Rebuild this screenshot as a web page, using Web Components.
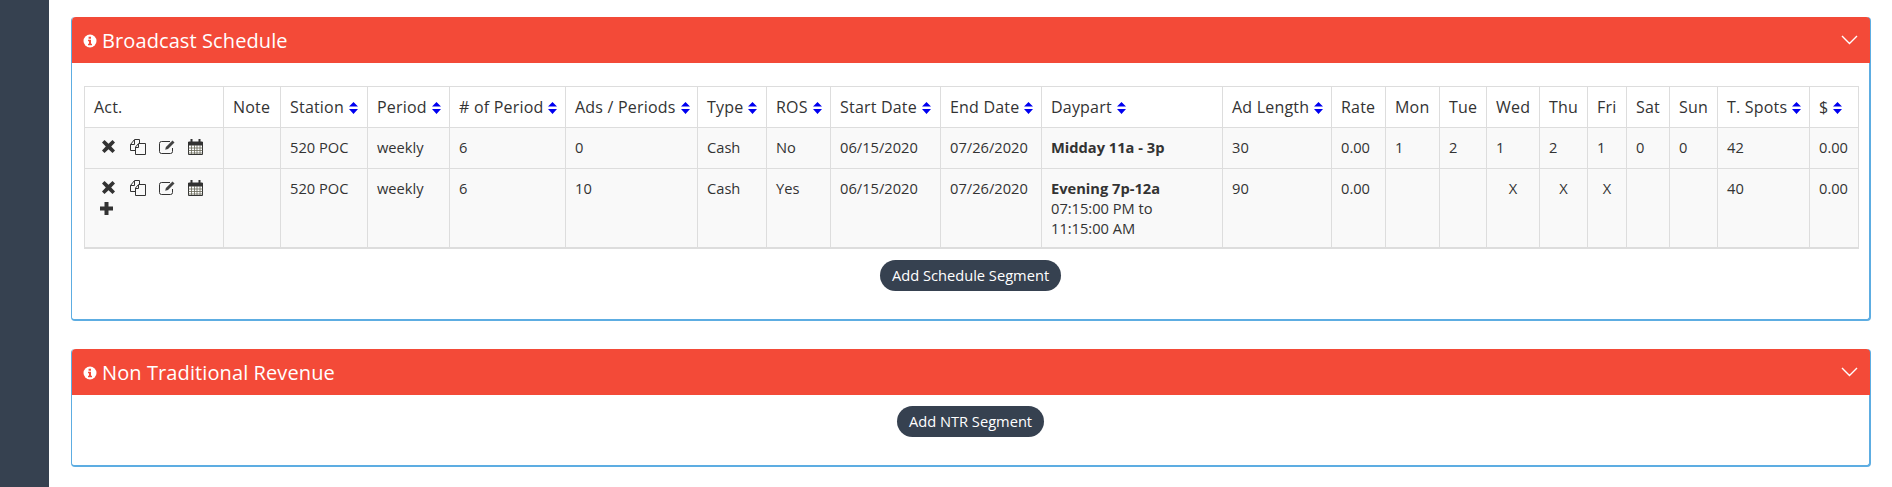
<!DOCTYPE html>
<html>
<head>
<meta charset="utf-8">
<title>Broadcast Schedule</title>
<style>
  html, body { margin: 0; height: 100%; overflow: hidden; background: #fff; }
  body { font-family: "Open Sans", sans-serif; color: #333; }
</style>
</head>
<body>
<app-shell>
  <collapse-panel heading="Broadcast Schedule">
    <schedule-table></schedule-table>
    <pill-button>Add Schedule Segment</pill-button>
  </collapse-panel>
  <collapse-panel heading="Non Traditional Revenue">
    <pill-button>Add NTR Segment</pill-button>
  </collapse-panel>
</app-shell>

<script>
// 全体レイアウト
class AppShell extends HTMLElement {
  constructor() {
    super();
    this.attachShadow({ mode: "open" });
    this.shadowRoot.innerHTML = `
      <style>
        :host { display: flex; height: 487px; }
        .side { flex: 0 0 49px; background: #364150; }
        main { flex: 1; min-width: 0; padding: 17px 21px 0 22px; display: flex; flex-direction: column; gap: 28px; }
      </style>
      <div class="side"></div>
      <main><slot></slot></main>`;
  }
}

class CollapsePanel extends HTMLElement {
  constructor() {
    super();
    this.attachShadow({ mode: "open" });
    this.shadowRoot.innerHTML = `
      <style>
        :host { display: block; border: 1px solid #5dade2; border-top: 0; border-right-width: 2px; border-bottom-width: 2px; border-radius: 4px; background: #fff; }
        header { height: 46px; margin: 0 -1px 0 0; background: #f34a38; color: #fff; display: flex; align-items: center; padding: 0 12px 0 11px; border-radius: 4px 4px 0 0; font-size: 20px; letter-spacing: .1px; }
        .info { margin-right: 5px; margin-top: 2px; }
        .title { flex: 1; }
        .body { padding: 11px 12px 28px; display: flex; flex-direction: column; align-items: center; }
      </style>
      <header>
        <svg class="info" width="14" height="14" viewBox="0 0 14 14">
          <circle cx="7" cy="7" r="6.5" fill="#fff"/>
          <path d="M5.6 2.8h2.4v2H5.6zM5 5.8h3v3.9h1v1.5H5V9.7h1V7.3H5z" fill="#f34a38"/>
        </svg>
        <span class="title"></span>
        <svg width="17" height="10" viewBox="0 0 17 10"><path d="M1 1l7.5 7.5L16 1" fill="none" stroke="#fff" stroke-width="1.4"/></svg>
      </header>
      <div class="body"><slot></slot></div>`;
    this.shadowRoot.querySelector(".title").textContent = this.getAttribute("heading");
  }
}

class PillButton extends HTMLElement {
  constructor() {
    super();
    this.attachShadow({ mode: "open" });
    this.shadowRoot.innerHTML = `
      <style>
        :host { display: inline-block; height: 31px; line-height: 30px; padding: 0 12px; border-radius: 16px; background: #364150; color: #fff; font-size: 14.67px; white-space: nowrap; }
      </style>
      <slot></slot>`;
  }
}

class SortCaret extends HTMLElement {
  constructor() {
    super();
    this.attachShadow({ mode: "open" });
    this.shadowRoot.innerHTML = `
      <style>
        :host { display: inline-block; width: 9px; height: 12px; margin-left: 5px; vertical-align: -1px; }
        svg { display: block; }
      </style>
      <svg width="9" height="12" viewBox="0 0 9 12"><path d="M4.5 0L9 4.6H0zM0 7h9l-4.5 5z" fill="#0000f0"/></svg>`;
  }
}

const ICONS = {
  remove: `<path d="M3.500 1L7.500 4.800 11.500 1 14 3.600 10.200 7.500 14 11.400 11.500 14 7.500 10.200 3.500 14 1 11.400 4.800 7.500 1 3.600z" fill="#333"/>`,
  copy: `<path d="M.5 11.500V5.500L4.500.5H9.500V4M.5 11.500H5M4.500 1V5.500H.5M5.500 15.500V8L8.500 4.500H15.500V15.500ZM8.500 5V8.500H5.500" fill="none" stroke="#333" stroke-width="1"/>`,
  edit: `<path d="M13.500 9V12.500a2 2 0 0 1-2 2H2.500a2 2 0 0 1-2-2V4.500a2 2 0 0 1 2-2H11" fill="none" stroke="#333" stroke-width="1"/><path d="M13.500 1.500l2 2-6.500 6.600-2.800.7.700-2.800z" fill="#444"/>`,
  calendar: `<path d="M.5 3h14v12.500H.5z" fill="#fff" stroke="#333" stroke-width="1"/><path d="M.5 3h14v3.500H.5z" fill="#333"/><path d="M.5 9h14M.5 11.500h14M.5 14h14M3.500 6v9M6.500 6v9M9 6v9M12 6v9" stroke="#665" stroke-width=".8"/><path d="M3.500 0v4.500M11.500 0v4.500" stroke="#333" stroke-width="2"/>`,
  plus: `<path d="M4.500 0h4v4.500h4.500v4H8.500V13h-4V8.500H0v-4h4.500z" fill="#333"/>`
};

class GlyphIcon extends HTMLElement {
  constructor() {
    super();
    this.attachShadow({ mode: "open" });
    const name = this.getAttribute("name");
    this.shadowRoot.innerHTML = `
      <style>
        :host { display: block; width: 16px; height: 16px; }
        svg { display: block; }
      </style>
      <svg width="16" height="16" viewBox="0 0 16 16">${ICONS[name]}</svg>`;
  }
}

// 表の定義
const COLS = [
  ["Act.", 139, false], ["Note", 57, false], ["Station", 87, true], ["Period", 82, true],
  ["# of Period", 116, true], ["Ads / Periods", 132, true], ["Type", 69, true], ["ROS", 64, true],
  ["Start Date", 110, true], ["End Date", 101, true], ["Daypart", 181, true], ["Ad Length", 109, true],
  ["Rate", 54, false], ["Mon", 54, false], ["Tue", 47, false], ["Wed", 53, false],
  ["Thu", 48, false], ["Fri", 39, false], ["Sat", 43, false], ["Sun", 48, false],
  ["T. Spots", 92, true], ["$", 49, true]
];

const ROWS = [
  {
    extra: false,
    cells: ["", "520 POC", "weekly", "6", "0", "Cash", "No", "06/15/2020", "07/26/2020",
      "<b>Midday 11a - 3p</b>", "30", "0.00", "1", "2", "1", "2", "1", "0", "0", "42", "0.00"]
  },
  {
    extra: true,
    cells: ["", "520 POC", "weekly", "6", "10", "Cash", "Yes", "06/15/2020", "07/26/2020",
      "<b>Evening 7p-12a</b><br>07:15:00 PM to<br>11:15:00 AM", "90", "0.00", "", "", "X", "X", "X", "", "", "40", "0.00"]
  }
];

class ScheduleTable extends HTMLElement {
  constructor() {
    super();
    this.attachShadow({ mode: "open" });
    const cols = COLS.map((c) => `<col style="width:${c[1]}px">`).join("");
    const head = COLS.map((c) => `<th>${c[0]}${c[2] ? "<sort-caret></sort-caret>" : ""}</th>`).join("");
    const body = ROWS.map((r) => {
      const act = `<td><div class="acts">
        <glyph-icon name="remove"></glyph-icon><glyph-icon name="copy"></glyph-icon>
        <glyph-icon name="edit"></glyph-icon><glyph-icon name="calendar"></glyph-icon>
        ${r.extra ? '<glyph-icon class="add" name="plus"></glyph-icon>' : ""}
      </div></td>`;
      const tds = r.cells.map((v) => `<td class="${v === "X" ? "x" : ""}">${v}</td>`).join("");
      return `<tr>${act}${tds}</tr>`;
    }).join("");
    this.shadowRoot.innerHTML = `
      <style>
        :host { display: block; width: 100%; margin: 12px 0 11px; font-size: 14.67px; color: #333; }
        table { width: 100%; table-layout: fixed; border-collapse: collapse; border-bottom: 2px solid #ddd; }
        th, td { border: 1px solid #ddd; padding: 10px 4px 10px 9px; line-height: 20px; text-align: left; vertical-align: top; white-space: nowrap; }
        th { font-weight: 500; font-size: 16px; letter-spacing: .2px; color: #333; }
        td { white-space: normal; background: #f9f9f9; padding-top: 9px; padding-bottom: 9px; }
        tbody tr { height: 41px; }
        td.x { text-align: center; padding-left: 4px; }
        b { font-weight: 700; }
        .acts { display: flex; flex-wrap: wrap; gap: 0 13px; margin-top: 2px; padding-left: 7px; }
        .add { margin-left: -1px; margin-top: 6px; }
      </style>
      <table>
        <colgroup>${cols}</colgroup>
        <thead><tr>${head}</tr></thead>
        <tbody>${body}</tbody>
      </table>`;
  }
}

customElements.define("app-shell", AppShell);
customElements.define("collapse-panel", CollapsePanel);
customElements.define("pill-button", PillButton);
customElements.define("sort-caret", SortCaret);
customElements.define("glyph-icon", GlyphIcon);
customElements.define("schedule-table", ScheduleTable);
</script>
</body>
</html>
